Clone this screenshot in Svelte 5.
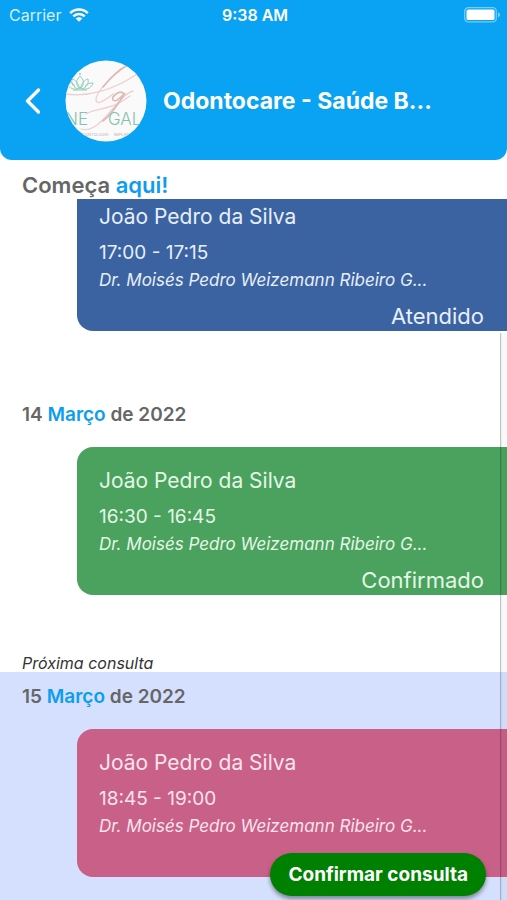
<script>
  const doctor = 'Dr. Moisés Pedro Weizemann Ribeiro G...';
  const patient = 'João Pedro da Silva';

  const visits = [
    { id: 1, date: null, time: '17:00 - 17:15', tone: 'attended', status: 'Atendido' },
    { id: 2, date: { day: '14', month: 'Março', year: '2022' }, time: '16:30 - 16:45', tone: 'confirmed', status: 'Confirmado' },
    { id: 3, date: { day: '15', month: 'Março', year: '2022' }, time: '18:45 - 19:00', tone: 'pending', next: true }
  ];
</script>

<div class="screen">
  <header>
    <div class="statusbar">
      <span class="carrier">
        Carrier
        <svg width="20" height="14" viewBox="0 0 20 14" aria-hidden="true">
          <g fill="none" stroke="#fff" stroke-width="2.5">
            <path d="M1.2 5.1a12.4 12.4 0 0 1 17.6 0" />
            <path d="M4.3 8.3a8 8 0 0 1 11.4 0" />
          </g>
          <path d="M6.7 10.6a4.7 4.7 0 0 1 6.6 0L10 13.8z" fill="#fff" />
        </svg>
      </span>
      <span class="clock">9:38 AM</span>
      <svg class="battery" width="37" height="16" viewBox="0 0 37 16" aria-hidden="true">
        <rect x="0.7" y="0.7" width="31.6" height="14.2" rx="3.6" fill="none" stroke="#fff" stroke-opacity="0.45" stroke-width="1.3" />
        <rect x="2.5" y="2.5" width="28" height="10.6" rx="1.6" fill="#fff" />
        <path d="M34 5.2q2 .8 2 2.6t-2 2.6z" fill="#fff" fill-opacity="0.5" />
      </svg>
    </div>
    <div class="titlebar">
      <button class="back" aria-label="Voltar">
        <svg width="18" height="28" viewBox="0 0 18 28" aria-hidden="true">
          <path d="M14.5 3L3.5 14l11 11" fill="none" stroke="#fff" stroke-width="3.4" stroke-linecap="round" stroke-linejoin="round" />
        </svg>
      </button>
      <svg class="logo" width="82" height="82" viewBox="0 0 82 82" aria-hidden="true">
        <defs><clipPath id="disc"><circle cx="41" cy="41" r="40.5" /></clipPath></defs>
        <g clip-path="url(#disc)">
          <rect width="82" height="82" fill="#fbfafa" />
          <g fill="none" stroke="#93cbb8" stroke-width="1">
            <path d="M15 29C10 24 11 20 15 16c4 4 5 8 0 13z" />
            <path d="M14 29C8 28 6 23 7 19c4 1 6 4 8 10M16 29c6-1 8-6 7-10-4 1-6 4-8 10" />
            <path d="M13 29C7 30 3 27 2 22c4 0 6 1 8 4M17 29c6 1 10-2 11-6-4 0-6 1-8 3M8 30h14" />
          </g>
          <circle cx="15" cy="14" r="1" fill="#93cbb8" />
          <g fill="none" stroke="#ecd0ce" stroke-width="1.3" stroke-linecap="round">
            <path d="M0 34C20 37 46 32 72 14" />
            <path d="M63 5C48 15 31 31 31 40c0 6 10 0 17-6" />
            <path d="M16 69C36 75 52 35 68 31" />
            <path d="M21 54c10-7 23-2 44-18" />
          </g>
          <g fill="none" stroke="#dfb9b6" stroke-width="1.6" stroke-linecap="round">
            <path d="M63 5C54 9 46 17 38 27" />
            <path d="M58 33c-4-3-12 4-10 7 3 3 8-3 12-7C54 43 46 55 38 61" />
          </g>
          <g fill="#86c1af" font-size="17" font-weight="300">
            <text x="0" y="65">NE</text>
            <text x="43" y="65">GAL</text>
          </g>
          <g fill="#bdaeb0" font-size="4">
            <text x="14" y="76">ODONTOLOGIA</text>
            <text x="49" y="76">IMPLANTES</text>
          </g>
        </g>
      </svg>
      <h1>Odontocare - Saúde B...</h1>
    </div>
  </header>

  <h2 class="start">Começa <em>aqui!</em></h2>

  <main>
    <div class="list">
      {#each visits as visit (visit.id)}
        {#if visit.next}
          <p class="hint">Próxima consulta</p>
        {/if}
        <section class:dated={visit.date} class:next={visit.next}>
          {#if visit.date}
            <h3>{visit.date.day} <em>{visit.date.month}</em> de {visit.date.year}</h3>
          {/if}
          <article class={visit.tone}>
            <p>{patient}</p>
            <p class="time">{visit.time}</p>
            <p class="doctor">{doctor}</p>
            {#if visit.status}
              <p class="status">{visit.status}</p>
            {/if}
            {#if visit.next}
              <button class="confirm">Confirmar consulta</button>
            {/if}
          </article>
        </section>
      {/each}
    </div>
    <div class="track" aria-hidden="true"></div>
  </main>
</div>

<style>
  :global(body) {
    margin: 0;
    background: #fff;
  }
  .screen {
    display: flex;
    flex-direction: column;
    height: 100vh;
    overflow: hidden;
    font-family: Inter, 'Open Sans', sans-serif;
    color: #666;
  }
  h1, h2, h3, p {
    margin: 0;
  }
  em {
    font-style: normal;
    color: #0d9df0;
  }
  button {
    border: 0;
    font-family: inherit;
    cursor: pointer;
  }
  header {
    flex: none;
    background: #0aa2f2;
    color: #fff;
    border-radius: 0 0 12px 12px;
    padding-bottom: 18px;
  }
  .statusbar {
    display: grid;
    grid-template-columns: 1fr auto 1fr;
    align-items: center;
    height: 30px;
    padding: 0 6px 0 9px;
    font-size: 16px;
  }
  .carrier {
    display: flex;
    align-items: center;
    gap: 8px;
    color: #d6effd;
  }
  .clock {
    font-weight: 600;
  }
  .battery {
    justify-self: end;
  }
  .titlebar {
    display: flex;
    align-items: center;
    margin-top: 30px;
    padding: 0 24px;
  }
  .back {
    display: flex;
    padding: 0;
    margin-right: 23px;
    background: none;
  }
  .logo {
    flex: none;
    margin-right: 16px;
  }
  h1 {
    font-size: 23px;
    font-weight: 700;
    line-height: 28px;
    white-space: nowrap;
  }
  .start {
    flex: none;
    padding: 12px 22px 1px;
    font-size: 22px;
    font-weight: 600;
    line-height: 26px;
  }
  main {
    position: relative;
    flex: 1;
    min-height: 0;
    overflow: hidden;
  }
  /* the list rests slightly scrolled beneath the heading */
  .list {
    display: flex;
    flex-direction: column;
    margin-top: -16px;
  }
  .dated {
    margin-top: 59px;
    padding-top: 13px;
  }
  .hint {
    margin-top: 59px;
    padding-left: 22px;
    font-size: 16px;
    font-style: italic;
    line-height: 18px;
    color: #333;
  }
  .next {
    margin-top: 0;
    padding-bottom: 40px;
    background: #d5e0fe;
  }
  h3 {
    margin-bottom: 20px;
    padding-left: 22px;
    font-size: 19px;
    font-weight: 600;
    line-height: 24px;
  }
  article {
    position: relative;
    box-sizing: border-box;
    min-height: 148px;
    margin-left: 77px;
    padding: 20px 23px 1px 22px;
    border-radius: 16px 0 0 16px;
    font-size: 21px;
    line-height: 28px;
    color: #e8effa;
  }
  .attended {
    background: #3b63a1;
  }
  .confirmed {
    background: #4aa25e;
    color: #e4f7e6;
  }
  .pending {
    background: #c86087;
    color: #fbe4ed;
  }
  .time {
    margin-top: 8px;
    font-size: 19px;
  }
  .doctor {
    font-size: 17px;
    font-style: italic;
    line-height: 26px;
  }
  .status {
    margin-top: 9px;
    font-size: 22px;
    text-align: right;
  }
  .confirm {
    position: absolute;
    right: 21px;
    bottom: -19px;
    height: 43px;
    padding: 0 18px;
    border-radius: 22px;
    background: #008000;
    box-shadow: 0 3px 4px rgba(0, 0, 0, 0.4);
    color: #fff;
    font-size: 19px;
    font-weight: 700;
    white-space: nowrap;
  }
  .track {
    position: absolute;
    top: 134px;
    right: 0;
    bottom: 0;
    width: 6px;
    border-left: 1px solid rgba(0, 0, 0, 0.22);
    background: linear-gradient(90deg, rgba(0, 0, 0, 0.08), rgba(0, 0, 0, 0.02) 30%);
  }
</style>
